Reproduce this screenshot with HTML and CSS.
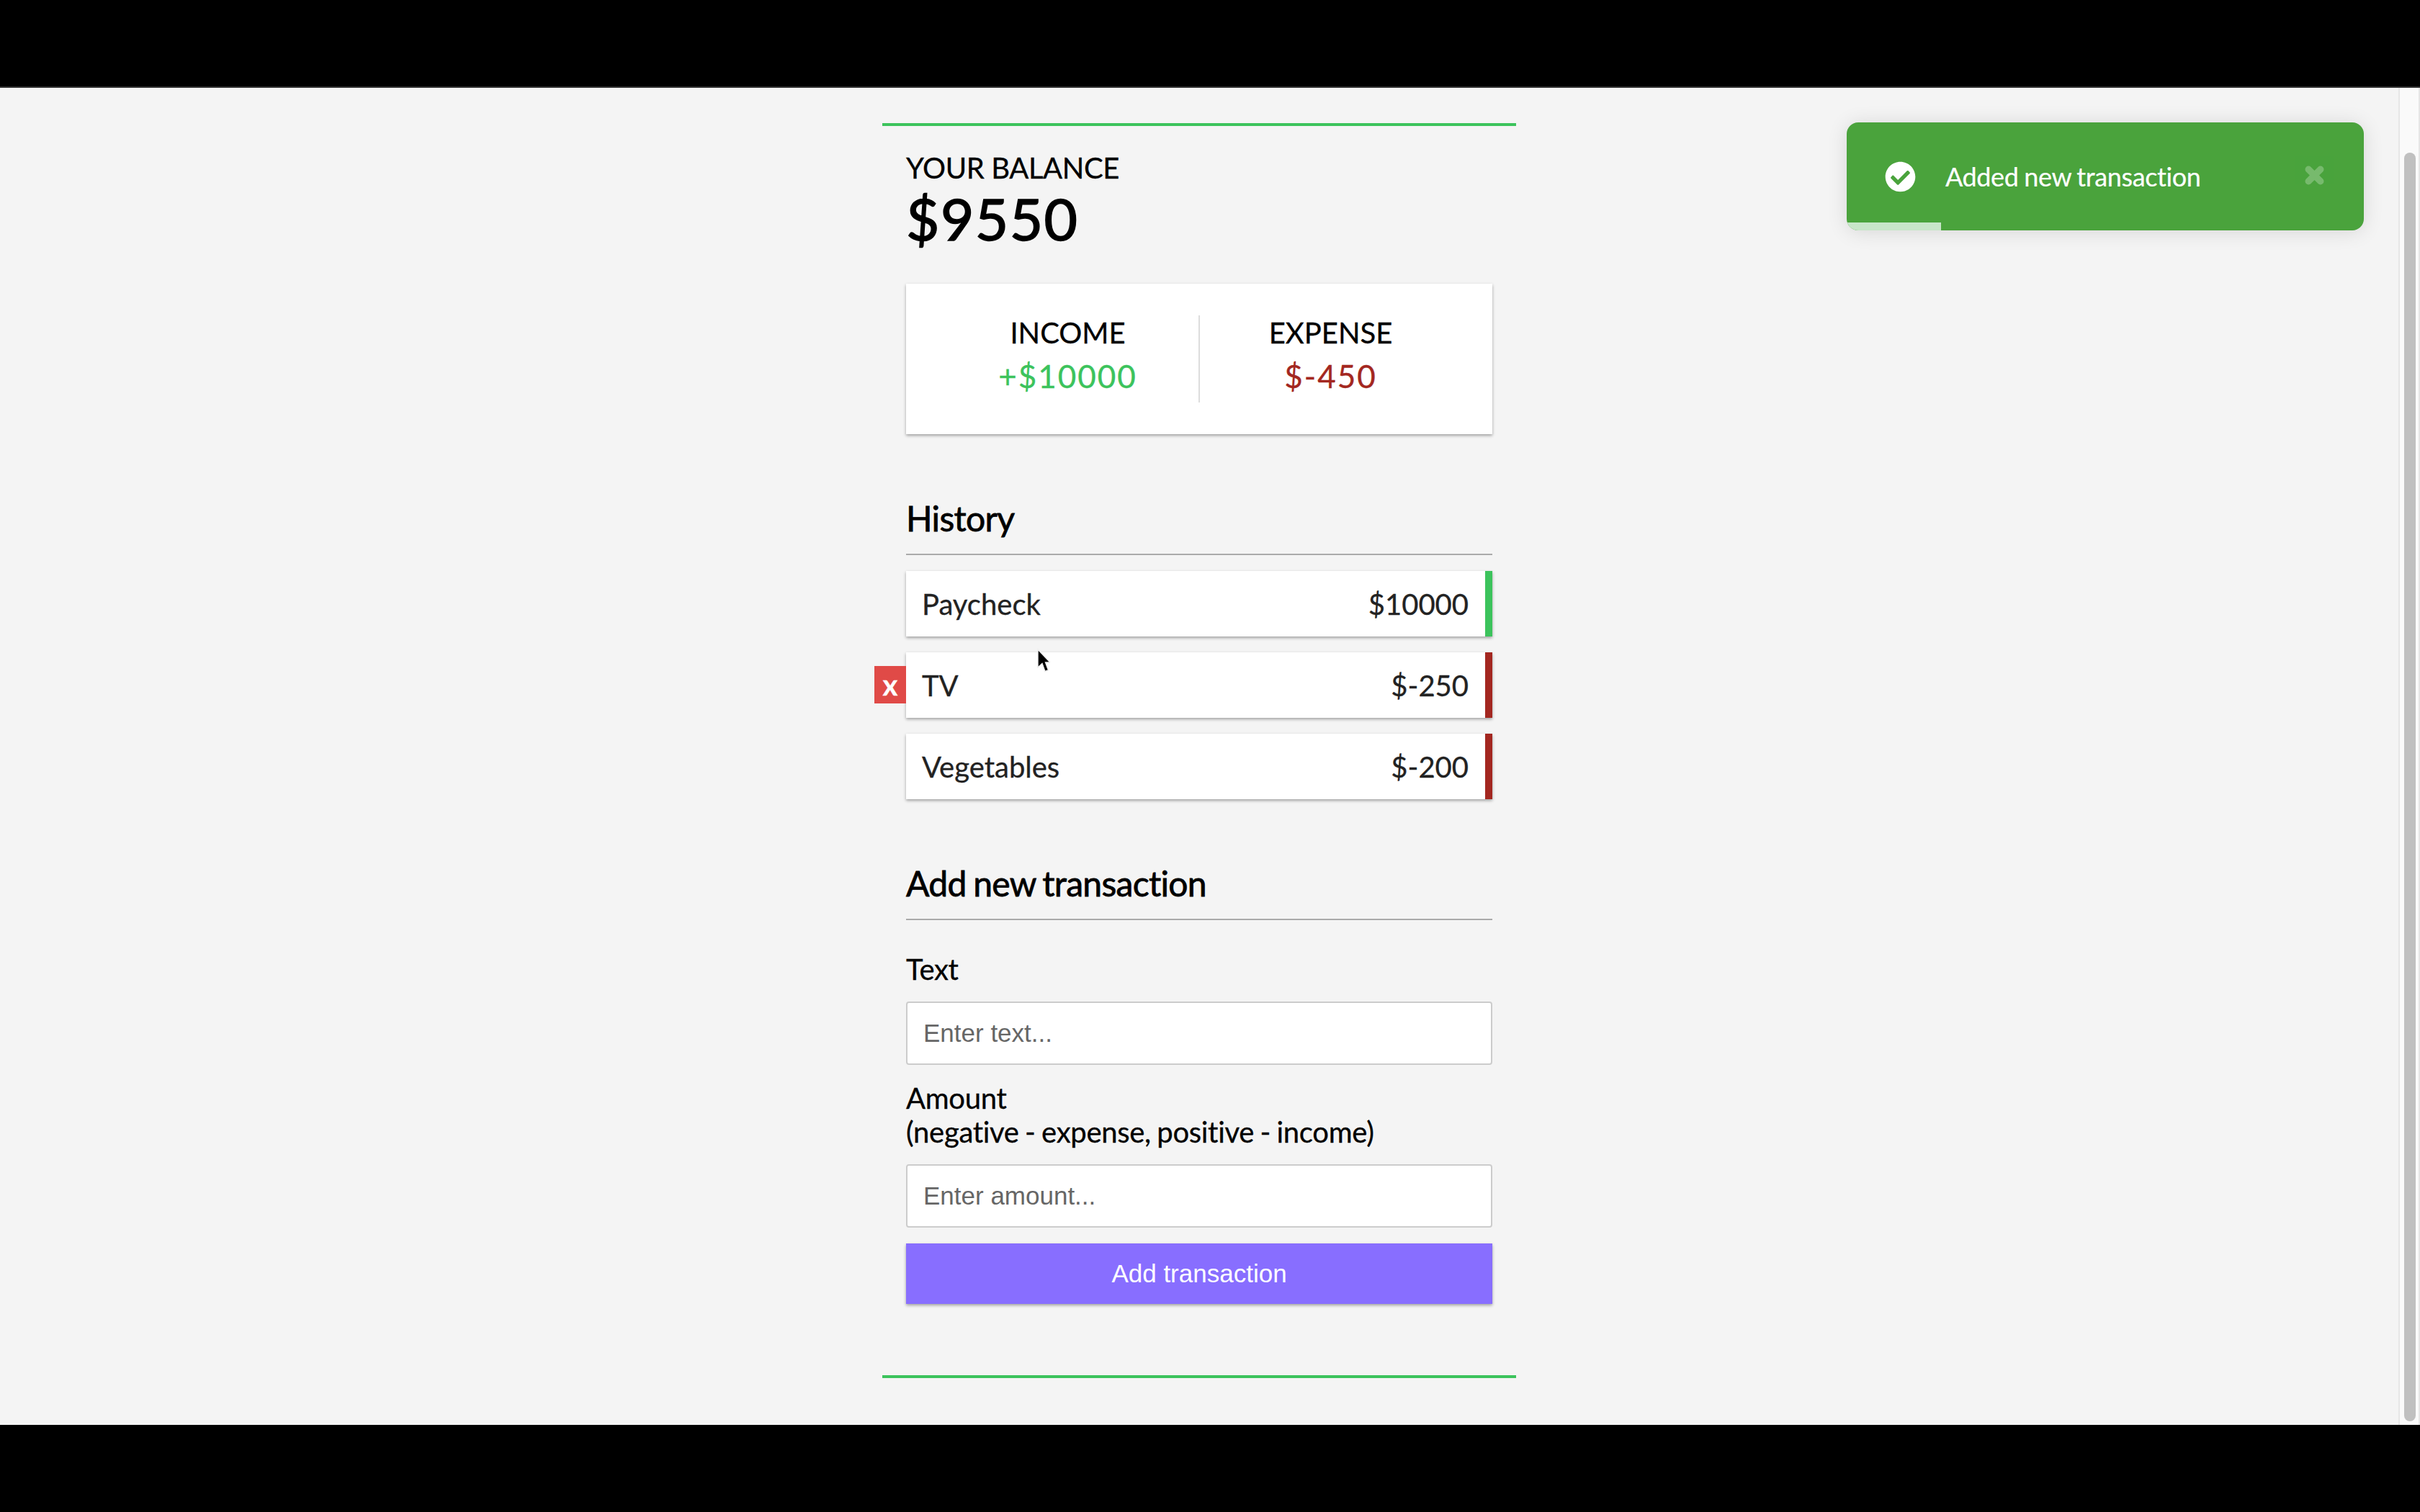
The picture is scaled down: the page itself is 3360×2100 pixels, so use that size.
FILE: index.html
```html
<!DOCTYPE html>
<html lang="en">
<head>
<meta charset="utf-8">
<title>Expense Tracker</title>
<link rel="stylesheet" href="styles.css">
</head>
<body>
<div class="letterbox-top"></div>
<div class="viewport">
  <main class="page">
    <div class="tracker">
      <h4 class="balance-label">YOUR BALANCE</h4>
      <h1 class="balance-value">$9550</h1>
      <div class="summary">
        <div class="summary-col">
          <h4 class="summary-title">INCOME</h4>
          <p class="summary-value plus">+$10000</p>
        </div>
        <div class="summary-col">
          <h4 class="summary-title">EXPENSE</h4>
          <p class="summary-value minus">$-450</p>
        </div>
      </div>
      <h3 class="section-title history-title">History</h3>
      <ul class="list">
        <li class="item plus-item"><span>Paycheck</span><span>$10000</span></li>
        <li class="item minus-item"><button class="delete">x</button><span>TV</span><span>$-250</span></li>
        <li class="item minus-item"><span>Vegetables</span><span>$-200</span></li>
      </ul>
      <h3 class="section-title add-title">Add new transaction</h3>
      <form class="form">
        <label class="label text-label">Text</label>
        <input class="input" type="text" placeholder="Enter text...">
        <label class="label amount-label">Amount<br>(negative - expense, positive - income)</label>
        <input class="input" type="text" placeholder="Enter amount...">
        <button class="submit" type="button">Add transaction</button>
      </form>
    </div>
  </main>
  <aside class="scrollbar"><div class="thumb"></div></aside>
  <div class="toast">
    <svg class="toast-icon" viewBox="0 0 512 512"><path fill="#fff" d="M504 256c0 137-111 248-248 248S8 393 8 256 119 8 256 8s248 111 248 248zM227.3 387.3l184-184c6.2-6.2 6.2-16.4 0-22.6l-22.6-22.6c-6.2-6.2-16.4-6.2-22.6 0L216 308.1l-70.1-70.1c-6.2-6.2-16.4-6.2-22.6 0l-22.6 22.6c-6.2 6.2-6.2 16.4 0 22.6l104 104c6.2 6.2 16.4 6.2 22.6 0z"/></svg>
    <span class="toast-text">Added new transaction</span>
    <svg class="toast-close" viewBox="0 0 26 26"><path fill="none" stroke="#fff" stroke-width="9" stroke-linecap="round" d="M5 5l16 16M21 5L5 21"/></svg>
    <div class="toast-progress"></div>
  </div>
  <svg class="cursor" viewBox="0 0 18 36"><path fill="#000" stroke="#eee" stroke-width="1.4" d="M1 2v25l6-5.500 4 11 4.500-1.800-4-10.700H18z"/></svg>
</div>
<div class="letterbox-bottom"></div>
</body>
</html>
```
FILE: styles.css
```css
* { box-sizing: border-box; }
html, body { margin: 0; padding: 0; height: 2100px; overflow: hidden; }
body { display: flex; flex-direction: column; background: #000; font-family: Lato, "Liberation Sans", sans-serif; color: #000; -webkit-text-stroke: 0.3px currentColor; }
.letterbox-top { height: 122px; background: #000; border-bottom: 2px solid #333; flex: none; }
.letterbox-bottom { height: 121px; background: #000; flex: none; }
.viewport { position: relative; flex: 1; display: flex; background: #f4f4f4; overflow: hidden; }
.page { flex: 1; display: flex; justify-content: center; padding-top: 49px; }
.tracker { width: 880px; height: 1743px; border-top: 4px solid #3cc35c; border-bottom: 4px solid #3cc35c; padding: 0 33px; }
.balance-label { margin: 34px 0 0; font-size: 40px; font-weight: 400; line-height: 48px; letter-spacing: -0.4px; }
.balance-value { margin: -2px 0 0; font-size: 80px; font-weight: 400; line-height: 96px; letter-spacing: 1.5px; -webkit-text-stroke: 1.6px #000; }
.summary { margin-top: 43px; height: 209px; background: #fff; box-shadow: 0 2px 4px rgba(0,0,0,.35); display: flex; padding: 44px 43px; }
.summary-col { flex: 1; text-align: center; height: 121px; }
.summary-col:first-child { border-right: 2px solid #ddd; }
.summary-title { margin: 0; font-size: 40px; font-weight: 400; line-height: 48px; }
.summary-value { margin: 8px 0 0; font-size: 44px; line-height: 56px; letter-spacing: 2px; }
.plus { color: #3cc35c; }
.minus { color: #a32720; }
.section-title { margin: 0; font-size: 48px; font-weight: 400; line-height: 58px; border-bottom: 2px solid #aaa; letter-spacing: -0.7px; word-spacing: -2px; -webkit-text-stroke: 0.8px #000; }
.history-title { margin-top: 88px; padding-bottom: 20px; }
.list { list-style: none; margin: 22px 0 0; padding: 0; display: flex; flex-direction: column; gap: 22px; }
.item { position: relative; height: 91px; background: #fff; color: #222; font-size: 40px; display: flex; justify-content: space-between; align-items: center; padding: 0 23px 0 22px; box-shadow: 0 2px 4px rgba(0,0,0,.35); }
.plus-item { border-right: 10px solid #3cc35c; }
.minus-item { border-right: 10px solid #a32720; }
.delete { position: absolute; left: -44px; top: 19px; width: 44px; height: 52px; border: 0; padding: 0; background: #e04a47; color: #fff; font: 700 40px/52px Lato, sans-serif; }
.add-title { margin-top: 88px; padding-bottom: 20px; }
.form { display: flex; flex-direction: column; }
.label { font-size: 40px; line-height: 47px; letter-spacing: -0.3px; word-spacing: -1.5px; }
.text-label { margin-top: 45px; }
.amount-label { margin-top: 23px; }
.input { height: 88px; margin-top: 21px; background: #fff; border: 2px solid #ccc; border-radius: 4px; padding: 0 22px; font: 35px "Liberation Sans", Arial, sans-serif; -webkit-text-stroke: 0; }
.input::placeholder { color: #666; opacity: 1; }
.submit { margin-top: 22px; height: 84px; border: 0; background: #886eff; color: #fff; font: 35px "Liberation Sans", Arial, sans-serif; box-shadow: 0 2px 4px rgba(0,0,0,.35); -webkit-text-stroke: 0; }
.scrollbar { flex: none; width: 30px; background: #fafafa; border-left: 2px solid #e6e6e6; border-right: 2px solid #e6e6e6; padding: 90px 4px 5px 6px; }
.thumb { height: 100%; background: #c0c0c0; border-radius: 8px; }
.toast { position: absolute; left: 2564px; top: 48px; width: 718px; height: 150px; background: #4aa33c; border-radius: 16px; box-shadow: 0 2px 28px rgba(0,0,0,.12); display: flex; align-items: center; overflow: hidden; color: #fff; padding: 0 0 0 53px; }
.toast-icon { width: 43px; height: 43px; flex: none; }
.toast-text { margin-left: 41px; font-size: 36px; flex: 1; letter-spacing: -0.4px; word-spacing: -1px; -webkit-text-stroke: 0.2px #fff; }
.toast-close { width: 27px; height: 27px; opacity: .25; margin: 0 55px 3px 0; flex: none; }
.toast-progress { position: absolute; left: 0; bottom: 0; width: 131px; height: 11px; background: #c8e6c9; }
.cursor { position: absolute; left: 1440px; top: 778px; width: 18px; height: 36px; }
```
